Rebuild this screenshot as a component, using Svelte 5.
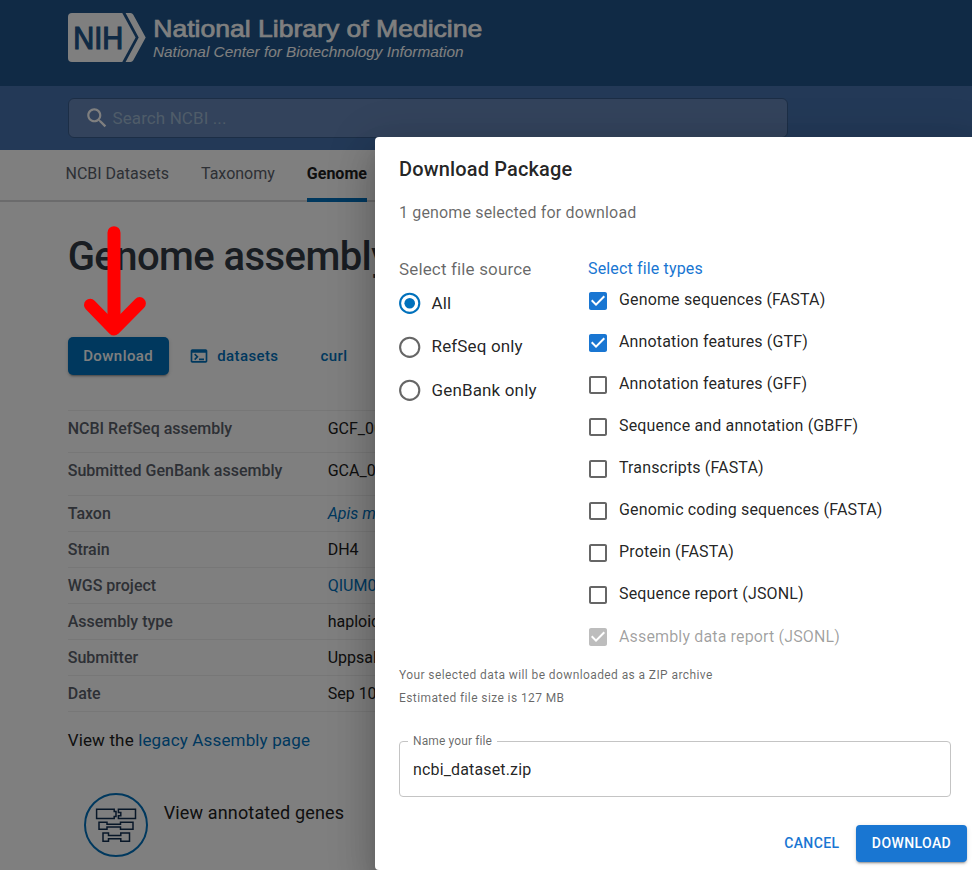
<script>
  const tabs = ['NCBI Datasets', 'Taxonomy', 'Genome'];
  const rows = [
    { k: 'NCBI RefSeq assembly', v: 'GCF_00', h: 42 },
    { k: 'Submitted GenBank assembly', v: 'GCA_00', h: 43 },
    { k: 'Taxon', v: 'Apis m', h: 36, link: true, italic: true },
    { k: 'Strain', v: 'DH4', h: 36 },
    { k: 'WGS project', v: 'QIUM0', h: 36, link: true },
    { k: 'Assembly type', v: 'haploid', h: 36 },
    { k: 'Submitter', v: 'Uppsal', h: 36 },
    { k: 'Date', v: 'Sep 10', h: 36 }
  ];
  const sources = ['All', 'RefSeq only', 'GenBank only'];
  let source = $state('All');
  let types = $state([
    { name: 'Genome sequences (FASTA)', on: true },
    { name: 'Annotation features (GTF)', on: true },
    { name: 'Annotation features (GFF)', on: false },
    { name: 'Sequence and annotation (GBFF)', on: false },
    { name: 'Transcripts (FASTA)', on: false },
    { name: 'Genomic coding sequences (FASTA)', on: false },
    { name: 'Protein (FASTA)', on: false },
    { name: 'Sequence report (JSONL)', on: false },
    { name: 'Assembly data report (JSONL)', on: true, disabled: true }
  ]);
</script>

<div class="app">
  <header class="top">
    <svg width="430" height="60" viewBox="0 0 430 60">
      <path fill="#fff" d="M4 5H54.3L67.6 29.5 54.3 54H4Q0 54 0 50V9Q0 5 4 5Z" />
      <path fill="#fff" d="M57.6 5H62.5Q64.3 5 65.3 6.8L77.7 29.5 65.3 52.2Q64.3 54 62.5 54H57.6L70.7 29.5Z" />
      <text class="nih" x="5.3" y="40.7" textLength="50" lengthAdjust="spacingAndGlyphs">NIH</text>
      <text class="nlm" x="85.3" y="29" textLength="329" lengthAdjust="spacingAndGlyphs">National Library of Medicine</text>
      <text class="ncbi" x="85" y="49" textLength="310.5" lengthAdjust="spacingAndGlyphs">National Center for Biotechnology Information</text>
    </svg>
  </header>
  <div class="searchbar">
    <div class="search">
      <svg width="26" height="26" viewBox="0 0 24 24"><path fill="#fff" d="M15.5 14h-.79l-.28-.27C15.41 12.59 16 11.11 16 9.5 16 5.91 13.09 3 9.5 3S3 5.91 3 9.5 5.91 16 9.5 16c1.61 0 3.09-.59 4.23-1.57l.27.28v.79l5 4.99L20.49 19l-4.99-5zm-6 0C7.01 14 5 11.99 5 9.5S7.01 5 9.5 5 14 7.01 14 9.5 11.99 14 9.5 14z" /></svg>
      <span>Search NCBI ...</span>
    </div>
  </div>
  <nav>
    {#each tabs as t}
      <span class:active={t === 'Genome'}>{t}</span>
    {/each}
  </nav>
  <main>
    <h1>Genome assembly</h1>
    <div class="actions">
      <button class="dl">Download</button>
      <svg width="20" height="20" viewBox="0 0 24 24"><path fill="#0071bc" d="M20 4H4c-1.11 0-2 .9-2 2v12c0 1.1.89 2 2 2h16c1.1 0 2-.9 2-2V6c0-1.1-.89-2-2-2zm0 14H4V8h16v10zm-2-1h-6v-2h6v2zM7.5 17l-1.41-1.41L8.67 13l-2.59-2.59L7.5 9l4 4-4 4z" /></svg>
      <span class="datasets">datasets</span>
      <span class="curl">curl</span>
    </div>
    <div class="table">
      {#each rows as r}
        <div class="row" style="height:{r.h}px">
          <b>{r.k}</b><span class:link={r.link} class:italic={r.italic}>{r.v}</span>
        </div>
      {/each}
    </div>
    <p class="legacy">View the <span class="link">legacy Assembly page</span></p>
    <div class="genes">
      <svg width="64" height="64" viewBox="0 0 64 64" fill="none">
        <circle cx="32" cy="32" r="31" stroke="#0071bc" stroke-width="2" />
        <g stroke="#112e51" stroke-width="1.5">
          <path d="M12.6 16.2H30.2V18.5H32V23.5H30.2V25.4H12.6ZM34.4 16.2H51.5V25.4H34.4V22.7H36.8V19.5H34.4Z" />
          <path d="M15 29.2H23V31.2H36.5V29.2H49V36.2H36.5V34H23V36.2H15Z" />
          <path d="M19 40H24.5V42.5H36.8V40H45.5V48.2H36.8V45.8H24.5V48.2H19Z" />
        </g>
      </svg>
      <span>View annotated genes</span>
    </div>
  </main>

  <div class="backdrop"></div>

  <section class="dialog">
    <h2>Download Package</h2>
    <p class="sub">1 genome selected for download</p>
    <div class="cols">
      <div class="sources">
        <div class="legend">Select file source</div>
        {#each sources as s}
          <label class="radio">
            <input type="radio" bind:group={source} value={s} />
            <svg width="22" height="22" viewBox="0 0 22 22">
              <circle cx="10.7" cy="11.3" r="9.6" fill="none" stroke={source === s ? '#0071bc' : '#666'} stroke-width="2.1" />
              {#if source === s}<circle cx="10.7" cy="11.3" r="5.3" fill="#0071bc" />{/if}
            </svg>
            <span>{s}</span>
          </label>
        {/each}
      </div>
      <div class="types">
        <div class="legend">Select file types</div>
        {#each types as t}
          <label class="check" class:disabled={t.disabled}>
            <input type="checkbox" bind:checked={t.on} disabled={t.disabled} />
            <svg width="18" height="18" viewBox="3 3 18 18">
              {#if t.on}
                <path fill={t.disabled ? '#bdbdbd' : '#1976d2'} d="M19 3H5c-1.11 0-2 .9-2 2v14c0 1.1.89 2 2 2h14c1.11 0 2-.9 2-2V5c0-1.1-.89-2-2-2zm-9 14l-5-5 1.41-1.41L10 14.17l7.59-7.59L19 8l-9 9z" />
              {:else}
                <path fill="#666" d="M19 5v14H5V5h14m0-2H5c-1.1 0-2 .9-2 2v14c0 1.1.9 2 2 2h14c1.1 0 2-.9 2-2V5c0-1.1-.9-2-2-2z" />
              {/if}
            </svg>
            <span>{t.name}</span>
          </label>
        {/each}
      </div>
    </div>
    <div class="info">
      <div>Your selected data will be downloaded as a ZIP archive</div>
      <div>Estimated file size is 127 MB</div>
    </div>
    <fieldset>
      <legend>Name your file</legend>
      <div class="value">ncbi_dataset.zip</div>
    </fieldset>
    <div class="foot">
      <button class="cancel">Cancel</button>
      <button class="go">Download</button>
    </div>
  </section>

  <svg class="arrow" width="70" height="116" viewBox="80 222 70 116" fill="none" stroke="#f00" stroke-linecap="round" stroke-linejoin="round">
    <path stroke-width="13" d="M114 232.7V326" />
    <path stroke-width="12.4" d="M90.2 305L114 329.3 139.7 303.3" />
  </svg>
</div>

<style>
  :global(body) { margin: 0; }
  .app {
    position: relative; width: 972px; height: 870px; overflow: hidden; background: #fff;
    font-family: Roboto, "Liberation Sans", sans-serif; font-size: 16px; color: #212121;
  }
  .app * { box-sizing: border-box; }
  button { font-family: inherit; border: 0; padding: 0; }
  .top { height: 86px; background: #20558a; padding: 8px 0 0 68px; }
  .top svg { display: block; }
  .top text { font-family: "Liberation Sans", Arial, sans-serif; fill: #fff; }
  .top .nih { font-size: 31px; fill: #20558a; stroke: #20558a; stroke-width: 1.2; }
  .top .nlm { font-size: 24px; stroke: #fff; stroke-width: .7; }
  .top .ncbi { font-size: 14.5px; font-style: italic; }
  .searchbar { height: 64px; background: #4773af; padding: 12px 0 0 68px; }
  .search {
    width: 720px; height: 40px; border: 1px solid #395c8c; border-radius: 6px; background: #6686b8;
    display: flex; align-items: center; padding-left: 15px; color: #9fb9d2;
  }
  .search span { margin-left: 2.5px; font-size: 17px; letter-spacing: .1px; }
  nav { height: 52px; border-bottom: 2px solid #d6d7d9; padding-left: 65.5px; display: flex; gap: 32px; color: #5b616b; }
  nav span { height: 52px; line-height: 47px; }
  nav .active { border-bottom: 4px solid #0071bc; color: #212121; font-weight: 700; }
  main { padding-left: 67.7px; }
  h1 { margin: 30px 0 0; font-size: 40px; line-height: 50px; font-weight: 500; color: #323a45; letter-spacing: -.57px; white-space: nowrap; }
  .actions { margin-top: 55px; height: 38px; display: flex; align-items: center; color: #0071bc; font-size: 15px; font-weight: 500; letter-spacing: .4px; }
  .dl {
    width: 101px; height: 38px; margin-right: 20.5px; border-radius: 5px; background: #0071bc; color: #fff;
    font-size: 15px; font-weight: 500; letter-spacing: .43px;
    box-shadow: 0 3px 1px -2px rgba(0,0,0,.2), 0 2px 2px rgba(0,0,0,.14), 0 1px 5px rgba(0,0,0,.12);
  }
  .datasets { margin-left: 8px; }
  .curl { margin-left: 42px; }
  .table { margin-top: 35px; width: 850px; border-top: 1px solid #efefef; }
  .row { display: flex; border-bottom: 1px solid #efefef; line-height: 35px; }
  .row b { width: 260px; font-weight: 500; color: #5b616b; }
  .link { color: #0071bc; }
  .italic { font-style: italic; }
  .legacy { margin: 16px 0 0; line-height: 24px; font-size: 17px; letter-spacing: .15px; }
  .genes { margin: 41px 0 0 16px; display: flex; font-size: 18px; letter-spacing: .15px; }
  .genes span { margin-left: 16px; line-height: 40px; }

  .backdrop { position: absolute; inset: 0; background: rgba(0,0,0,.5); }
  .arrow { position: absolute; left: 80px; top: 222px; }
  .dialog {
    position: absolute; left: 375px; top: 137px; width: 600px; height: 733px; padding: 16px 24px 0;
    background: #fff; border-radius: 4px; color: rgba(0,0,0,.87);
    box-shadow: 0 11px 15px -7px rgba(0,0,0,.2), 0 24px 38px 3px rgba(0,0,0,.14), 0 9px 46px 8px rgba(0,0,0,.12);
  }
  h2 { margin: 0; font-size: 20px; line-height: 32px; font-weight: 500; letter-spacing: .15px; }
  .sub { margin: 16px 0 0; line-height: 24px; letter-spacing: .15px; color: rgba(0,0,0,.6); }
  .cols { display: flex; margin-top: 32px; height: 402px; }
  .sources { width: 189px; }
  .legend { line-height: 24px; letter-spacing: .15px; }
  .sources .legend { height: 24.7px; color: rgba(0,0,0,.6); font-size: 17px; }
  .types .legend { height: 23px; color: #1976d2; }
  label { display: flex; align-items: center; }
  label input { appearance: none; width: 0; height: 0; margin: 0; }
  .radio { height: 43.5px; font-size: 17px; letter-spacing: .15px; }
  .radio svg { overflow: visible; }
  .radio span { margin-left: 10.5px; padding-bottom: 1px; }
  .check { height: 42px; letter-spacing: .15px; padding-left: 1px; }
  .check span { margin-left: 12px; padding-bottom: 3px; }
  .check.disabled span { color: rgba(0,0,0,.38); padding-bottom: 1px; }
  .info { font-size: 12px; line-height: 23px; letter-spacing: .4px; color: rgba(0,0,0,.6); margin-top: 5px; }
  fieldset { margin: 24px 0 0; padding: 0 13px; width: 552px; height: 63px; border: 1px solid #c4c4c4; border-radius: 4px; }
  fieldset legend { margin-left: -5px; padding: 0 5px; font-size: 12px; line-height: 14px; letter-spacing: .11px; color: rgba(0,0,0,.6); }
  .value { line-height: 43px; letter-spacing: .15px; }
  .foot { display: flex; justify-content: flex-end; align-items: center; margin: 28px -16px 0 0; height: 37px; }
  .foot button { height: 37px; padding-bottom: 1px; font-size: 14px; font-weight: 500; letter-spacing: .4px; text-transform: uppercase; }
  .foot .cancel { background: none; color: #1976d2; margin-right: 16.5px; }
  .foot .go {
    width: 111px; border-radius: 4px; background: #1976d2; color: #fff;
    box-shadow: 0 3px 1px -2px rgba(0,0,0,.2), 0 2px 2px rgba(0,0,0,.14), 0 1px 5px rgba(0,0,0,.12);
  }
</style>
